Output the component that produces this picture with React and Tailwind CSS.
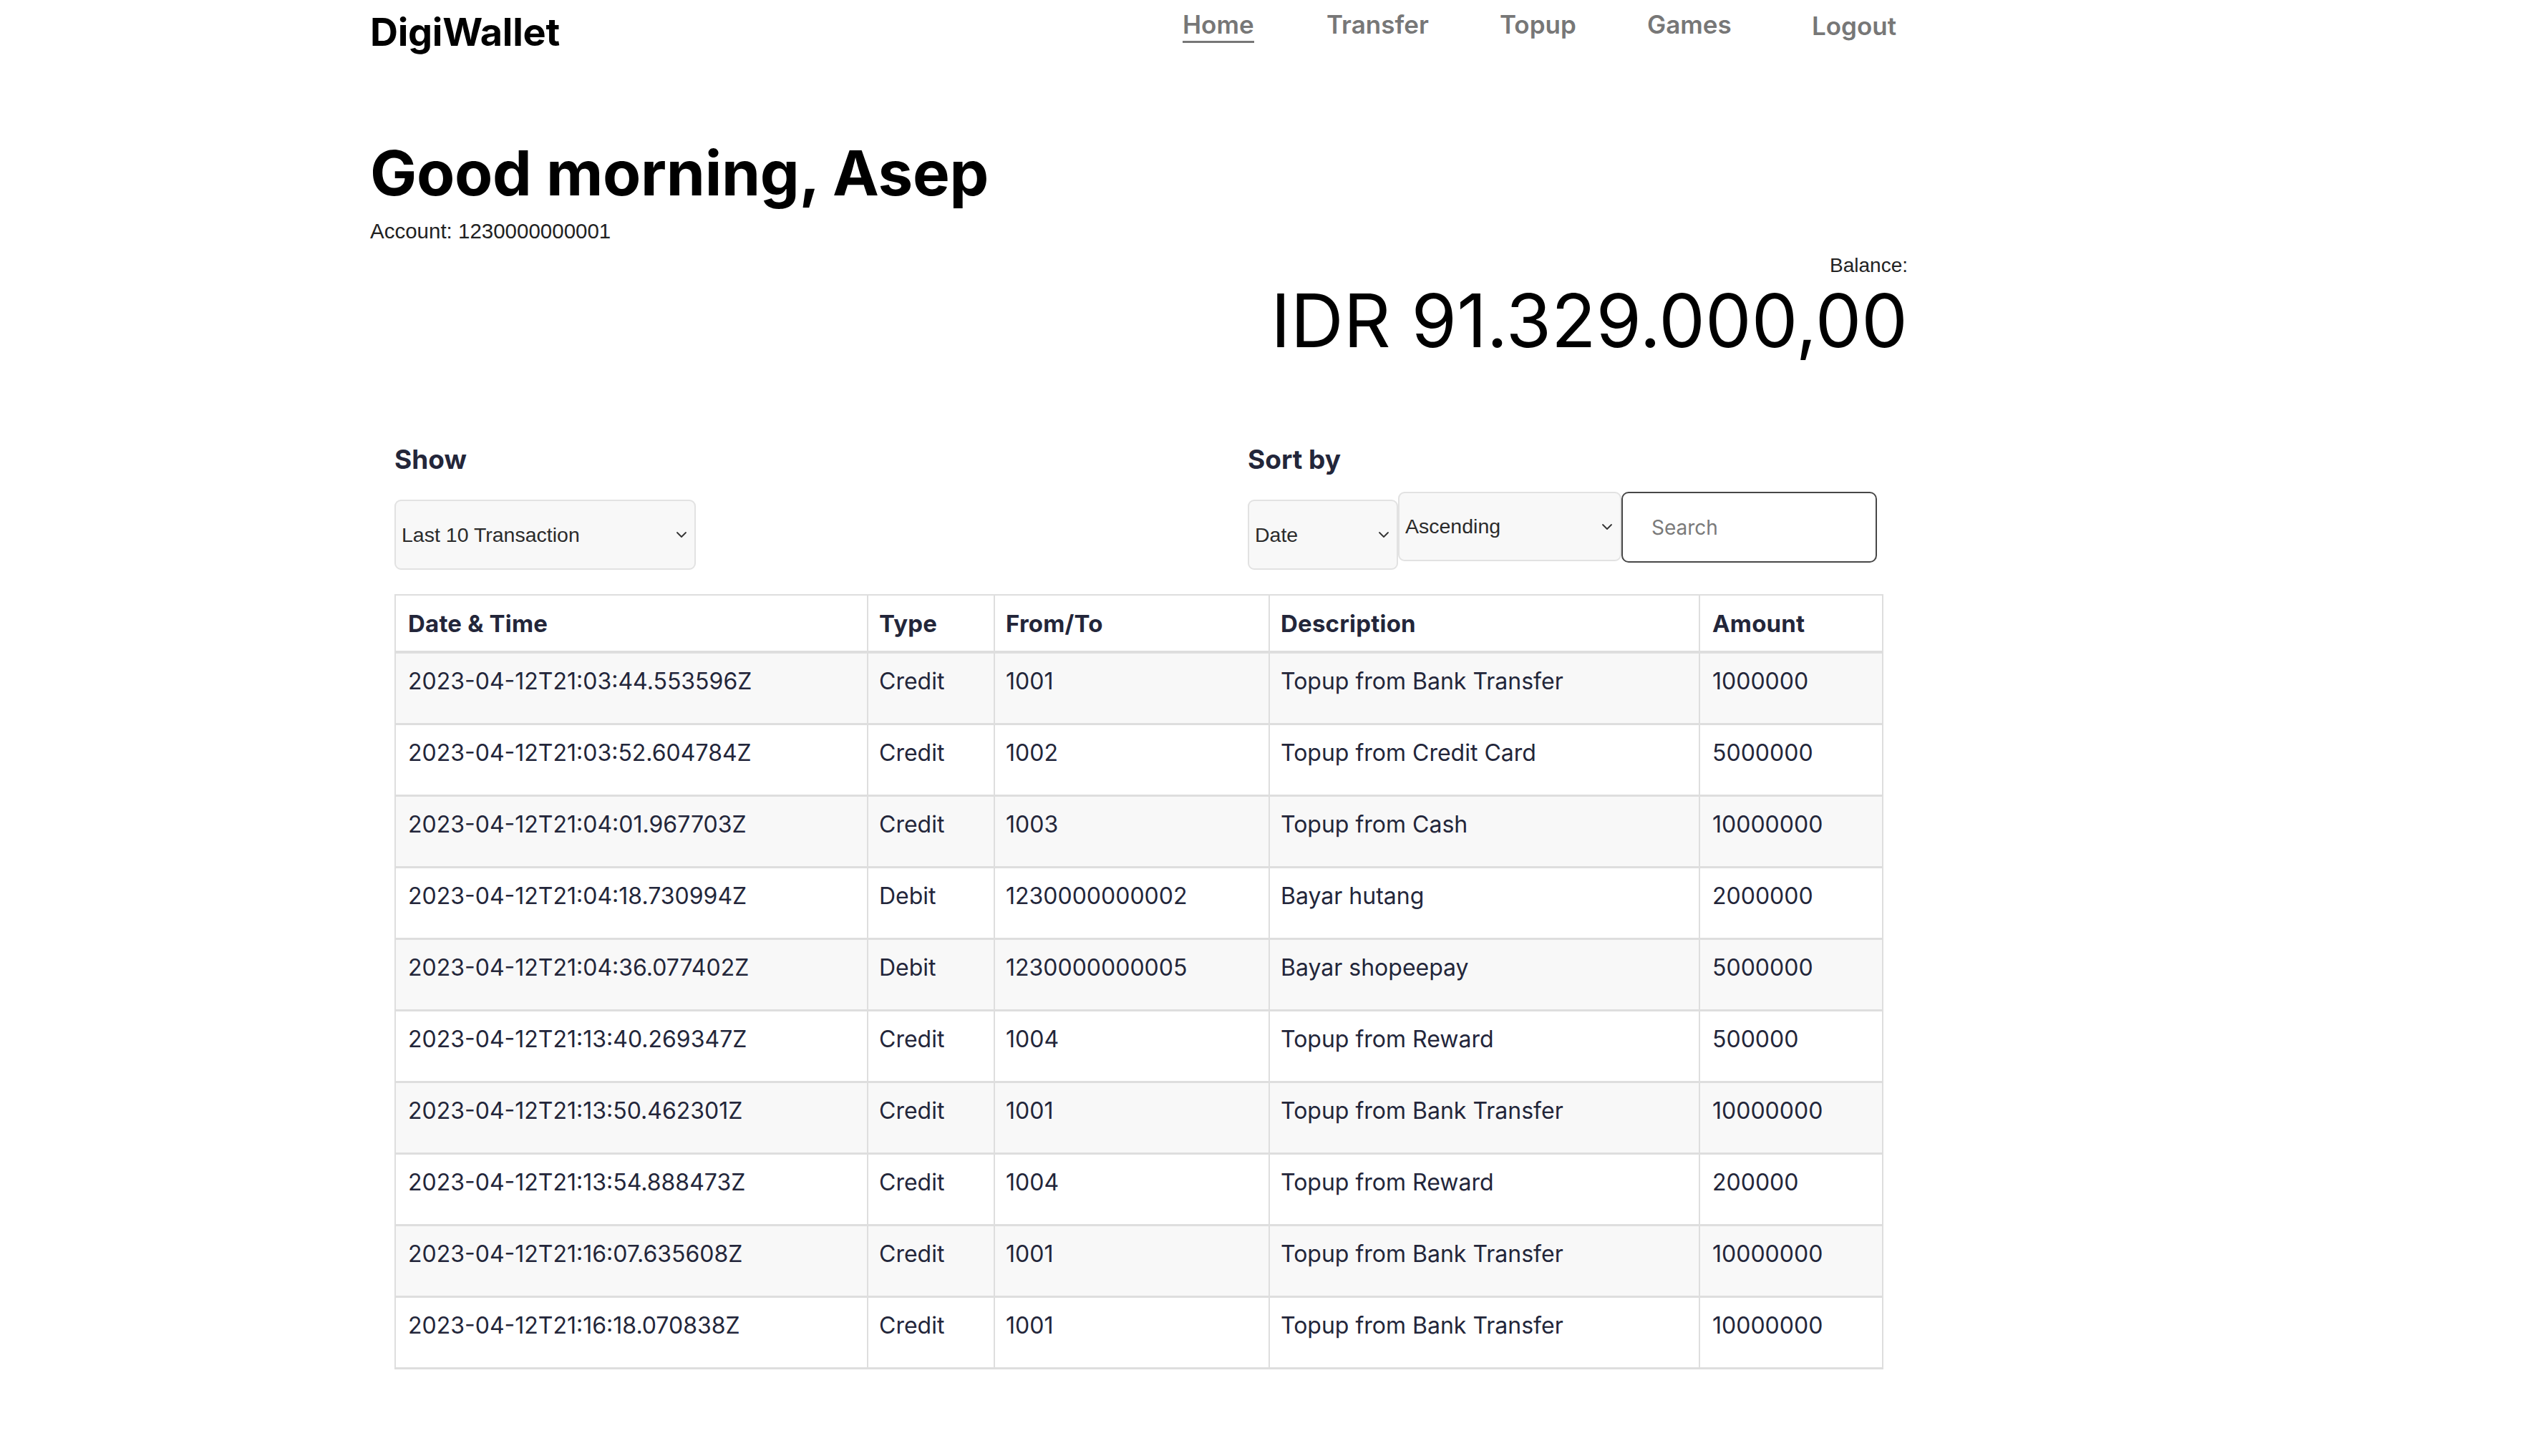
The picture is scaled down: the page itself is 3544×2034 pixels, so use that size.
import React from "react";

const rows = [
  ["2023-04-12T21:03:44.553596Z", "Credit", "1001", "Topup from Bank Transfer", "1000000"],
  ["2023-04-12T21:03:52.604784Z", "Credit", "1002", "Topup from Credit Card", "5000000"],
  ["2023-04-12T21:04:01.967703Z", "Credit", "1003", "Topup from Cash", "10000000"],
  ["2023-04-12T21:04:18.730994Z", "Debit", "1230000000002", "Bayar hutang", "2000000"],
  ["2023-04-12T21:04:36.077402Z", "Debit", "1230000000005", "Bayar shopeepay", "5000000"],
  ["2023-04-12T21:13:40.269347Z", "Credit", "1004", "Topup from Reward", "500000"],
  ["2023-04-12T21:13:50.462301Z", "Credit", "1001", "Topup from Bank Transfer", "10000000"],
  ["2023-04-12T21:13:54.888473Z", "Credit", "1004", "Topup from Reward", "200000"],
  ["2023-04-12T21:16:07.635608Z", "Credit", "1001", "Topup from Bank Transfer", "10000000"],
  ["2023-04-12T21:16:18.070838Z", "Credit", "1001", "Topup from Bank Transfer", "10000000"],
];

function Chevron() {
  return (
    <svg width="16" height="10" viewBox="0 0 16 10" fill="none">
      <path d="M2 2 L8 8 L14 2" stroke="#333" strokeWidth="1.8" strokeLinecap="round" strokeLinejoin="round" />
    </svg>
  );
}

function FakeSelect({ label, className }) {
  return (
    <div
      className={
        "flex items-center justify-between bg-[#f8f8f8] border-2 border-[#e2e2e2] rounded-[9px] pl-[8px] pr-[10px] text-[28.5px] text-[#2b2b2b] font-['Liberation_Sans',Arial,sans-serif] " +
        className
      }
    >
      <span>{label}</span>
      <Chevron />
    </div>
  );
}

export default function App() {
  const navItem = "text-[35px] font-semibold text-[#777777] leading-[40px]";
  return (
    <div className="min-h-screen w-full bg-white font-['Inter',sans-serif]">
      <div className="ml-[517px] w-[2148px]">
        {/* Nav */}
        <nav className="flex h-[80px] items-start">
          <div className="w-[1135px] pt-[15px]">
            <span className="text-[54px] font-bold leading-[60px] text-black tracking-[-0.3px]">DigiWallet</span>
          </div>
          <div className="w-[201px] pt-[14px]">
            <span className={navItem + " inline-block border-b-[3px] border-[#777777] pb-[3px]"}>Home</span>
          </div>
          <div className="w-[242px] pt-[14px]">
            <span className={navItem}>Transfer</span>
          </div>
          <div className="w-[206px] pt-[14px]">
            <span className={navItem}>Topup</span>
          </div>
          <div className="w-[230px] pt-[14px]">
            <span className={navItem}>Games</span>
          </div>
          <div className="pt-[16px]">
            <span className={navItem}>Logout</span>
          </div>
        </nav>

        {/* Greeting */}
        <h1 className="mt-[112px] text-[87px] font-bold leading-[100px] text-black tracking-[-0.3px]">
          Good morning, Asep
        </h1>
        <div className="mt-[13px] text-[29.5px] leading-[36px] text-[#222] font-['Liberation_Sans',Arial,sans-serif]">
          Account: 1230000000001
        </div>

        {/* Balance */}
        <div className="mt-[13px] flex flex-col items-end">
          <div className="text-[28px] leading-[34px] text-[#222] font-['Liberation_Sans',Arial,sans-serif]">
            Balance:
          </div>
          <div className="text-[102.5px] leading-[120px] font-normal text-black">IDR 91.329.000,00</div>
        </div>

        {/* Controls + table */}
        <section className="mt-[112px] ml-[34px] w-[2078px] text-[#23263a]">
          <div className="flex">
            <div className="w-[1192px]">
              <div className="text-[37px] font-bold leading-[44px]">Show</div>
              <FakeSelect label="Last 10 Transaction" className="mt-[34px] w-[421px] h-[98px]" />
            </div>
            <div>
              <div className="text-[37px] font-bold leading-[44px]">Sort by</div>
              <div className="mt-[23px] flex items-start">
                <FakeSelect label="Date" className="mt-[11px] w-[210px] h-[98px]" />
                <FakeSelect label="Ascending" className="w-[312px] h-[97px] items-center" />
                <input
                  placeholder="Search"
                  className="w-[357px] h-[99px] border-2 border-[#474747] rounded-[10px] pl-[40px] text-[28px] text-[#333] placeholder:text-[#7a7a7a] outline-none"
                />
              </div>
            </div>
          </div>

          <table className="mt-[34px] w-[2078px] border-collapse border-2 border-[#dedede] table-fixed">
            <colgroup>
              <col className="w-[660px]" />
              <col className="w-[177px]" />
              <col className="w-[384px]" />
              <col className="w-[601px]" />
              <col className="w-[256px]" />
            </colgroup>
            <thead>
              <tr className="h-[80px]">
                {["Date & Time", "Type", "From/To", "Description", "Amount"].map((h, i) => (
                  <th
                    key={h}
                    className={
                      "border-x-2 border-b-4 border-[#dedede] text-left align-middle text-[33px] font-bold leading-[40px] tracking-[0.2px] " +
                      (i === 0 || i === 4 ? "pl-[17px]" : "pl-[15px]")
                    }
                  >
                    {h}
                  </th>
                ))}
              </tr>
            </thead>
            <tbody>
              {rows.map((r, ri) => (
                <tr key={ri} className={"h-[100px] " + (ri % 2 === 0 ? "bg-[#f8f8f8]" : "bg-white")}>
                  {r.map((c, i) => (
                    <td
                      key={i}
                      className={
                        "border-x-2 border-b-[3px] border-[#dedede] align-top pt-[19px] text-[32px] leading-[40px] font-normal " +
                        (i === 0 || i === 4 ? "pl-[17px]" : "pl-[15px]")
                      }
                    >
                      {c}
                    </td>
                  ))}
                </tr>
              ))}
            </tbody>
          </table>
        </section>
      </div>
    </div>
  );
}
